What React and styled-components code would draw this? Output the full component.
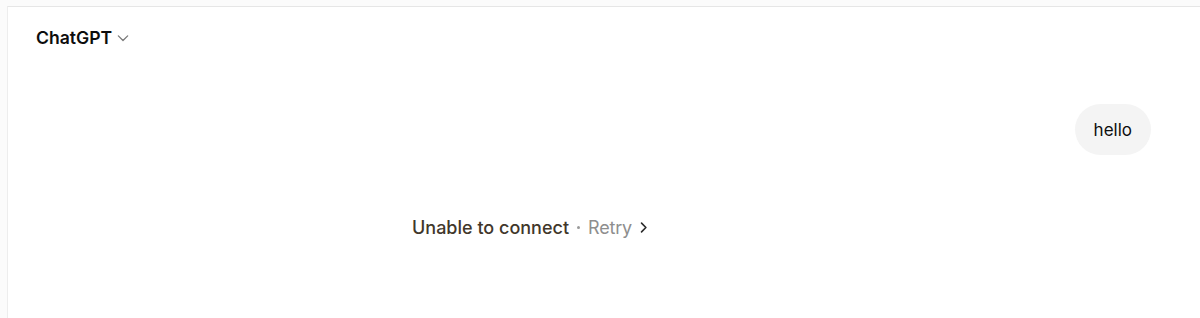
import React from 'react'
import styled, { createGlobalStyle } from 'styled-components'

const Global = createGlobalStyle`
  html, body {
    margin: 0;
    padding: 0;
    background: #ffffff;
    font-family: Inter, "Liberation Sans", sans-serif;
    -webkit-font-smoothing: antialiased;
  }
`

const Page = styled.div`
  height: 318px;
  padding-top: 6px;
  box-sizing: border-box;
  background: #fbfbfb;
`

const Panel = styled.main`
  display: flex;
  flex-direction: column;
  height: 100%;
  margin-left: 7px;
  background: #ffffff;
  border-top: 1px solid #e6e6e6;
  border-left: 1px solid #ededed;
  box-sizing: border-box;
`

const Header = styled.header`
  display: flex;
  align-items: center;
  height: 61px;
  padding-left: 28px;
  box-sizing: border-box;
`

const ModelPicker = styled.button`
  display: inline-flex;
  align-items: center;
  gap: 4px;
  padding: 0;
  border: 0;
  background: none;
  font-family: inherit;
  font-size: 17.6px;
  font-weight: 600;
  color: #0d0d0d;
  cursor: pointer;
`

const Thread = styled.section`
  display: flex;
  flex-direction: column;
`

const UserRow = styled.div`
  display: flex;
  justify-content: flex-end;
  padding: 36px 49px 0 0;
`

const Bubble = styled.div`
  padding: 0 19px;
  height: 51px;
  display: flex;
  align-items: center;
  border-radius: 26px;
  background: #f4f4f4;
  font-size: 17px;
  color: #0d0d0d;
`

const ErrorRow = styled.div`
  display: flex;
  align-items: center;
  gap: 8px;
  padding: 62px 0 0 404px;
  font-size: 18px;
`

const ErrorText = styled.span`
  color: #41372b;
  font-weight: 500;
`

const Dot = styled.span`
  width: 3px;
  height: 3px;
  border-radius: 50%;
  background: #9a9a9a;
`

const Retry = styled.button`
  display: inline-flex;
  align-items: center;
  gap: 5px;
  padding: 0;
  border: 0;
  background: none;
  font-family: inherit;
  font-size: 18px;
  letter-spacing: -0.2px;
  color: #8e8e8e;
  cursor: pointer;
`

const Chevron = ({ size = 12, dir = 'down', color = '#6b6b6b', width = 1.4 }) => (
  <svg width={size} height={size} viewBox="0 0 12 12" fill="none">
    {dir === 'down'
      ? <path d="M2 4.2 6 8.2l4-4" stroke={color} strokeWidth={width} strokeLinecap="round" strokeLinejoin="round" />
      : <path d="M4.2 2 8.2 6l-4 4" stroke={color} strokeWidth={width} strokeLinecap="round" strokeLinejoin="round" />}
  </svg>
)

export default function App() {
  return (
    <>
      <Global />
      <Page>
        <Panel>
          <Header>
            <ModelPicker>
              ChatGPT
              <Chevron size={14} color="#7a7a7a" width={1.1} />
            </ModelPicker>
          </Header>
          <Thread>
            <UserRow>
              <Bubble>hello</Bubble>
            </UserRow>
            <ErrorRow>
              <ErrorText>Unable to connect</ErrorText>
              <Dot />
              <Retry>
                Retry
                <Chevron size={13} dir="right" color="#2b2b2b" width={1.5} />
              </Retry>
            </ErrorRow>
          </Thread>
        </Panel>
      </Page>
    </>
  )
}
